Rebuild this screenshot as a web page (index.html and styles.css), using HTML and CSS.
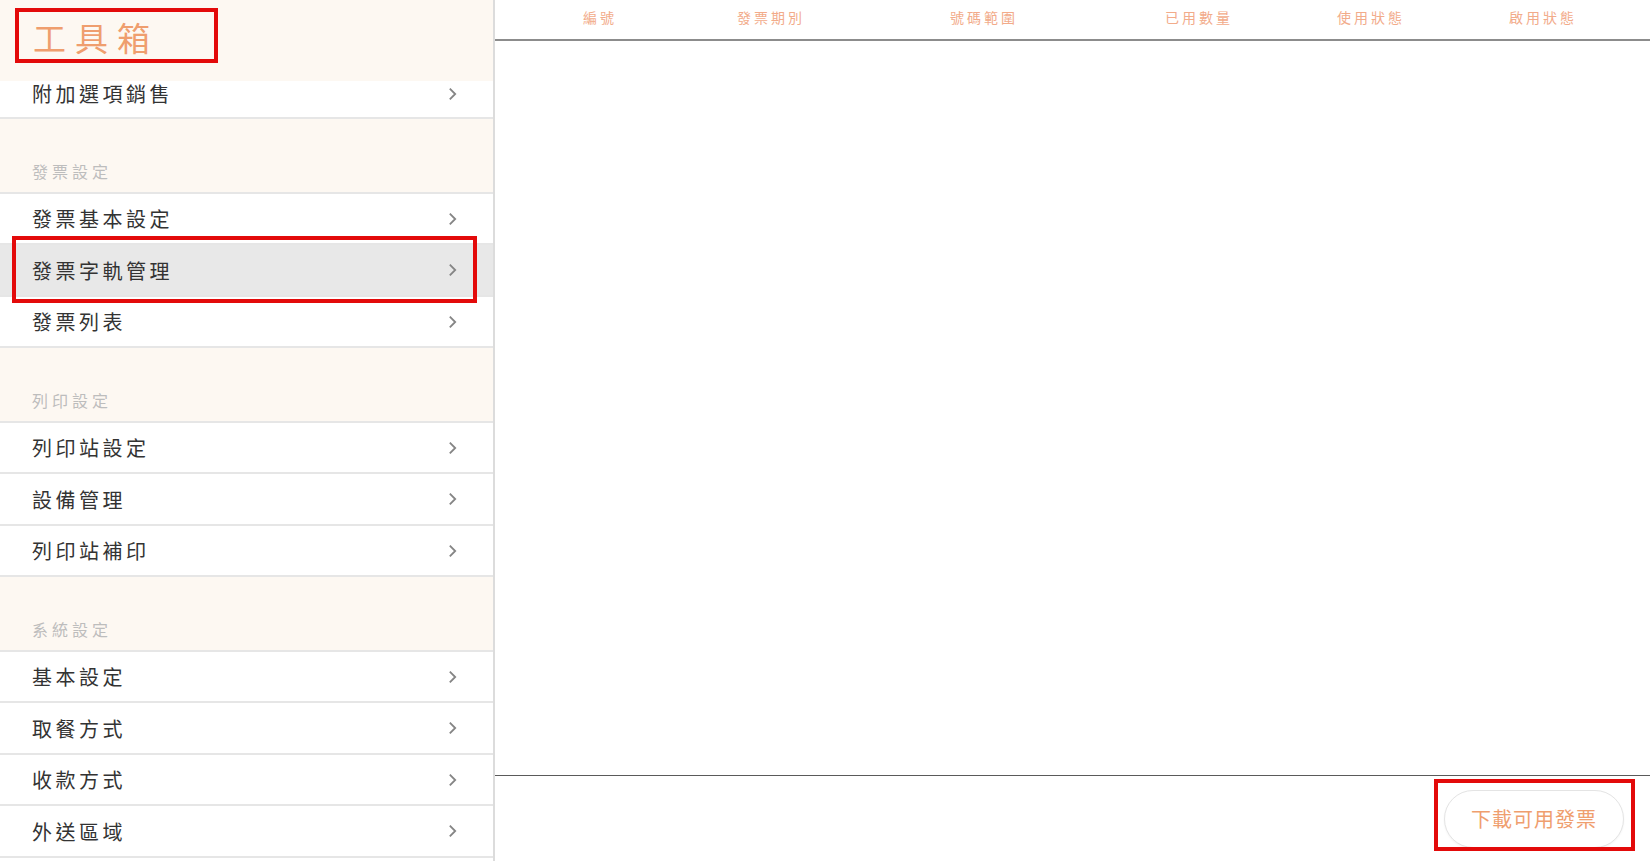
FILE: index.html
```html
<!DOCTYPE html>
<html lang="zh-Hant">
<head>
    <meta charset="UTF-8">
    <meta name="viewport" content="width=device-width, initial-scale=1.0">
    <title>工具箱</title>
    <link rel="stylesheet" href="styles.css">
</head>
<body>
    <div class="sidebar">
        <div class="sidebar-head">
            <div class="title-mark">
                <h1 class="title">工具箱</h1>
            </div>
        </div>

        <div class="menu">
            <div class="menu-item partial">
                <span>附加選項銷售</span>
                <svg class="chevron" viewBox="0 0 8 13"><path d="M1.5 1.5 L6.5 6.5 L1.5 11.5"/></svg>
            </div>

            <!-- 發票 -->
            <div class="menu-section">發票設定</div>
            <div class="menu-item">
                <span>發票基本設定</span>
                <svg class="chevron" viewBox="0 0 8 13"><path d="M1.5 1.5 L6.5 6.5 L1.5 11.5"/></svg>
            </div>
            <div class="menu-item active">
                <span>發票字軌管理</span>
                <svg class="chevron" viewBox="0 0 8 13"><path d="M1.5 1.5 L6.5 6.5 L1.5 11.5"/></svg>
                <div class="mark mark-row"></div>
            </div>
            <div class="menu-item">
                <span>發票列表</span>
                <svg class="chevron" viewBox="0 0 8 13"><path d="M1.5 1.5 L6.5 6.5 L1.5 11.5"/></svg>
            </div>

            <!-- 列印 -->
            <div class="menu-section">列印設定</div>
            <div class="menu-item">
                <span>列印站設定</span>
                <svg class="chevron" viewBox="0 0 8 13"><path d="M1.5 1.5 L6.5 6.5 L1.5 11.5"/></svg>
            </div>
            <div class="menu-item">
                <span>設備管理</span>
                <svg class="chevron" viewBox="0 0 8 13"><path d="M1.5 1.5 L6.5 6.5 L1.5 11.5"/></svg>
            </div>
            <div class="menu-item">
                <span>列印站補印</span>
                <svg class="chevron" viewBox="0 0 8 13"><path d="M1.5 1.5 L6.5 6.5 L1.5 11.5"/></svg>
            </div>

            <!-- 系統 -->
            <div class="menu-section">系統設定</div>
            <div class="menu-item">
                <span>基本設定</span>
                <svg class="chevron" viewBox="0 0 8 13"><path d="M1.5 1.5 L6.5 6.5 L1.5 11.5"/></svg>
            </div>
            <div class="menu-item">
                <span>取餐方式</span>
                <svg class="chevron" viewBox="0 0 8 13"><path d="M1.5 1.5 L6.5 6.5 L1.5 11.5"/></svg>
            </div>
            <div class="menu-item">
                <span>收款方式</span>
                <svg class="chevron" viewBox="0 0 8 13"><path d="M1.5 1.5 L6.5 6.5 L1.5 11.5"/></svg>
            </div>
            <div class="menu-item">
                <span>外送區域</span>
                <svg class="chevron" viewBox="0 0 8 13"><path d="M1.5 1.5 L6.5 6.5 L1.5 11.5"/></svg>
            </div>
        </div>
    </div>

    <div class="main">
        <div class="table-head">
            <div class="col">編號</div>
            <div class="col">發票期別</div>
            <div class="col">號碼範圍</div>
            <div class="col">已用數量</div>
            <div class="col">使用狀態</div>
            <div class="col">啟用狀態</div>
        </div>

        <div class="table-body"></div>

        <div class="footer">
            <div class="btn-wrap">
                <button class="btn-download">下載可用發票</button>
                <div class="mark mark-btn"></div>
            </div>
        </div>
    </div>
</body>
</html>
```

FILE: styles.css
```css
* {
    box-sizing: border-box;
}

body {
    margin: 0;
    height: 100vh;
    display: flex;
    overflow: hidden;
    background: #fff;
    font-family: "Noto Sans CJK TC", "Noto Sans", sans-serif;
    color: #333;
}

/* 左側選單 */
.sidebar {
    width: 495px;
    flex-shrink: 0;
    display: flex;
    flex-direction: column;
    border-right: 2px solid #dcdcdc;
    background: #fff;
    overflow: hidden;
}

.sidebar-head {
    height: 81px;
    flex-shrink: 0;
    background: #fdf8f2;
    padding: 8px 0 0 15px;
}

.title-mark {
    width: 203px;
    height: 55px;
    border: 4px solid #e30a0a;
    padding: 5px 0 0 14px;
}

.title {
    margin: 0;
    font-size: 33px;
    line-height: 40px;
    font-weight: 400;
    letter-spacing: 9px;
    color: #ef9e6e;
}

.menu {
    flex: 1;
    display: flex;
    flex-direction: column;
}

.menu-item {
    position: relative;
    height: 51.5px;
    flex-shrink: 0;
    display: flex;
    align-items: center;
    justify-content: space-between;
    padding: 1px 36px 0 32px;
    border-bottom: 2px solid #e6e6e6;
    font-size: 20px;
    letter-spacing: 3.5px;
    color: #333;
}

.menu-item.partial {
    height: 38px;
    align-items: flex-start;
    padding-top: 0;
    line-height: 26px;
}

.menu-item.partial .chevron {
    margin-top: 6px;
}

.menu-item.active {
    background: #e8e8e8;
}

.chevron {
    width: 9px;
    height: 14px;
    fill: none;
    stroke: #858585;
    stroke-width: 1.7;
}

.menu-section {
    height: 74.5px;
    flex-shrink: 0;
    display: flex;
    align-items: flex-end;
    padding: 0 0 9px 32px;
    background: #fdf8f2;
    border-bottom: 2px solid #e6e6e6;
    font-size: 16px;
    line-height: 24px;
    letter-spacing: 4px;
    color: #bdbdbd;
}

/* 紅框標註 */
.mark {
    position: absolute;
    border: 4px solid #e30a0a;
    pointer-events: none;
}

.mark-row {
    top: -9px;
    bottom: -8px;
    left: 12px;
    right: 16px;
}

.mark-btn {
    top: -11px;
    bottom: -3px;
    left: -10px;
    right: -11px;
}

/* 右側內容 */
.main {
    flex: 1;
    display: flex;
    flex-direction: column;
    min-width: 0;
}

.table-head {
    height: 41px;
    flex-shrink: 0;
    display: grid;
    grid-template-columns: 172px 170px 256px 174px 170px 174px;
    align-items: center;
    padding: 0 20px 6px 19px;
    border-bottom: 2px solid #8c8c8c;
}

.col {
    text-align: center;
    font-size: 14px;
    letter-spacing: 3px;
    color: #f2ab8a;
}

.table-body {
    flex: 1;
}

.footer {
    height: 86px;
    flex-shrink: 0;
    display: flex;
    align-items: center;
    justify-content: flex-end;
    padding: 0 26px 0 0;
    border-top: 1px solid #5a5a5a;
}

.btn-wrap {
    position: relative;
}

.btn-download {
    width: 180px;
    height: 58px;
    border: 1px solid #e4e4e4;
    border-radius: 29px;
    background: #fff;
    box-shadow: 0 1px 2px rgba(0, 0, 0, 0.05);
    font-family: inherit;
    font-size: 20px;
    letter-spacing: 1px;
    color: #ef9e6e;
    cursor: pointer;
}
```
